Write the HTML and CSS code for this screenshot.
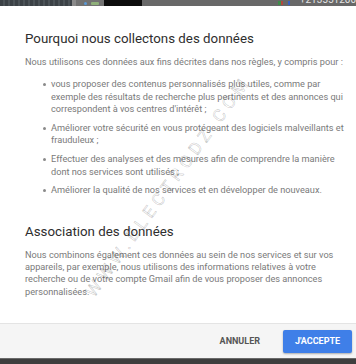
FILE: index.html
```html
<!DOCTYPE html>
<html lang="fr">
<head>
  <meta charset="UTF-8" />
  <title>Pourquoi nous collectons des données</title>
  <link rel="stylesheet" href="styles.css">
</head>
<body>
  <div class="page">
    <div class="taskbar">
      <span class="seg seg-dark"></span>
      <span class="seg seg-tool"><i class="dot blue"></i><i class="dot green"></i></span>
      <span class="seg seg-black"></span>
      <span class="seg seg-grey">
        <i class="tray red"></i><i class="tray blue"></i>
        <span class="phone">+213551200</span>
      </span>
    </div>

    <div class="dialog">
      <div class="content">
        <h2>Pourquoi nous collectons des données</h2>
        <p>Nous utilisons ces données aux fins décrites dans nos règles, y compris pour :</p>
        <ul>
          <li>vous proposer des contenus personnalisés plus utiles, comme par exemple des résultats de recherche plus pertinents et des annonces qui correspondent à vos centres d'intérêt ;</li>
          <li>Améliorer votre sécurité en vous protégeant des logiciels malveillants et frauduleux ;</li>
          <li>Effectuer des analyses et des mesures afin de comprendre la manière dont nos services sont utilisés ;</li>
          <li>Améliorer la qualité de nos services et en développer de nouveaux.</li>
        </ul>

        <h2 class="second">Association des données</h2>
        <p class="tight">Nous combinons également ces données au sein de nos services et sur vos appareils, par exemple, nous utilisons des informations relatives à votre recherche ou de votre compte Gmail afin de vous proposer des annonces personnalisées.</p>

        <div class="watermark">WWW.ELECTRODZ.COM</div>
      </div>

      <div class="footer">
        <button class="btn btn-flat">Annuler</button>
        <button class="btn btn-primary">J'accepte</button>
      </div>
    </div>

    <div class="bottombar"></div>
  </div>
</body>
</html>
```

FILE: styles.css
```css
* {
  margin: 0;
  padding: 0;
  box-sizing: border-box;
  font-family: 'Roboto', 'Liberation Sans', sans-serif;
}

body {
  background: #ffffff;
  width: 356px;
  height: 364px;
  overflow: hidden;
}

.page {
  display: flex;
  flex-direction: column;
  height: 364px;
}

/* strip of the desktop behind the dialog */
.taskbar {
  display: flex;
  height: 6px;
  overflow: hidden;
  flex-shrink: 0;
}

.seg {
  display: flex;
  align-items: flex-end;
  height: 6px;
}

.seg-dark {
  width: 75px;
  background: repeating-linear-gradient(90deg, #3b4146 0 3px, #4b5257 3px 5px);
}

.seg-tool {
  width: 33px;
  background: #727272;
  border-left: 4px solid #8a8a8a;
  gap: 4px;
  padding-left: 8px;
  align-items: center;
}

.seg-black {
  width: 39px;
  background: #0d0d0d;
}

.seg-grey {
  flex: 1;
  background: #686868;
  padding-left: 136px;
  gap: 5px;
  align-items: flex-start;
}

.dot {
  width: 3px;
  height: 3px;
  border-radius: 50%;
}

.dot.blue { background: #5a9ad8; }
.dot.green { background: #8fb07a; width: 8px; border-radius: 1px; }

.tray {
  width: 5px;
  height: 4px;
  margin-top: 1px;
}

.tray.red { background: linear-gradient(90deg, #3e8c4a 50%, #b3463e 50%); }
.tray.blue { background: #3b5fc0; width: 2px; margin-right: 5px; }

.phone {
  color: #e4e4e4;
  font-size: 10px;
  line-height: 10px;
  margin-top: -5px;
  white-space: nowrap;
}

.dialog {
  flex: 1;
  display: flex;
  flex-direction: column;
  background: #ffffff;
}

.content {
  position: relative;
  flex: 1;
  padding: 24px 10px 0 25px;
  overflow: hidden;
}

h2 {
  font-size: 13.3px;
  font-weight: 400;
  line-height: 18px;
  color: #2e2e2e;
  margin-bottom: 8px;
}

h2.second {
  margin-top: 26px;
  margin-bottom: 8px;
}

p, li {
  font-size: 9.2px;
  line-height: 12.8px;
  color: #7a7a7a;
}

p.tight {
  line-height: 12.4px;
}

ul {
  margin-top: 9px;
  padding-left: 26px;
  list-style: none;
}

li {
  position: relative;
  margin-bottom: 5.5px;
}

li::before {
  content: "";
  position: absolute;
  left: -8px;
  top: 5px;
  width: 3px;
  height: 3px;
  border-radius: 50%;
  background: #8a8a8a;
}

.watermark {
  position: absolute;
  left: 168px;
  top: 180px;
  transform: translate(-50%, -50%) rotate(-54deg);
  font-size: 17px;
  letter-spacing: 5px;
  white-space: nowrap;
  color: transparent;
  -webkit-text-stroke: 0.6px rgba(0, 0, 0, 0.22);
  pointer-events: none;
}

.footer {
  display: flex;
  justify-content: flex-end;
  align-items: center;
  gap: 7px;
  height: 35px;
  flex-shrink: 0;
  padding-right: 4px;
  background: #f5f5f5;
  border-top: 1px solid #e4e4e4;
}

.btn {
  border: none;
  border-radius: 2px;
  font-size: 9px;
  font-weight: 700;
  text-transform: uppercase;
  height: 23px;
  cursor: pointer;
}

.btn-flat {
  background: transparent;
  color: #555555;
  padding: 0 16px;
}

.btn-primary {
  width: 69px;
  background: #3f7fe8;
  color: #ffffff;
  box-shadow: 0 1px 2px rgba(0, 0, 0, 0.3);
}

.bottombar {
  height: 6px;
  flex-shrink: 0;
  background: #3e3e3e;
  border-top: 1px solid #6a6a6a;
}
```
